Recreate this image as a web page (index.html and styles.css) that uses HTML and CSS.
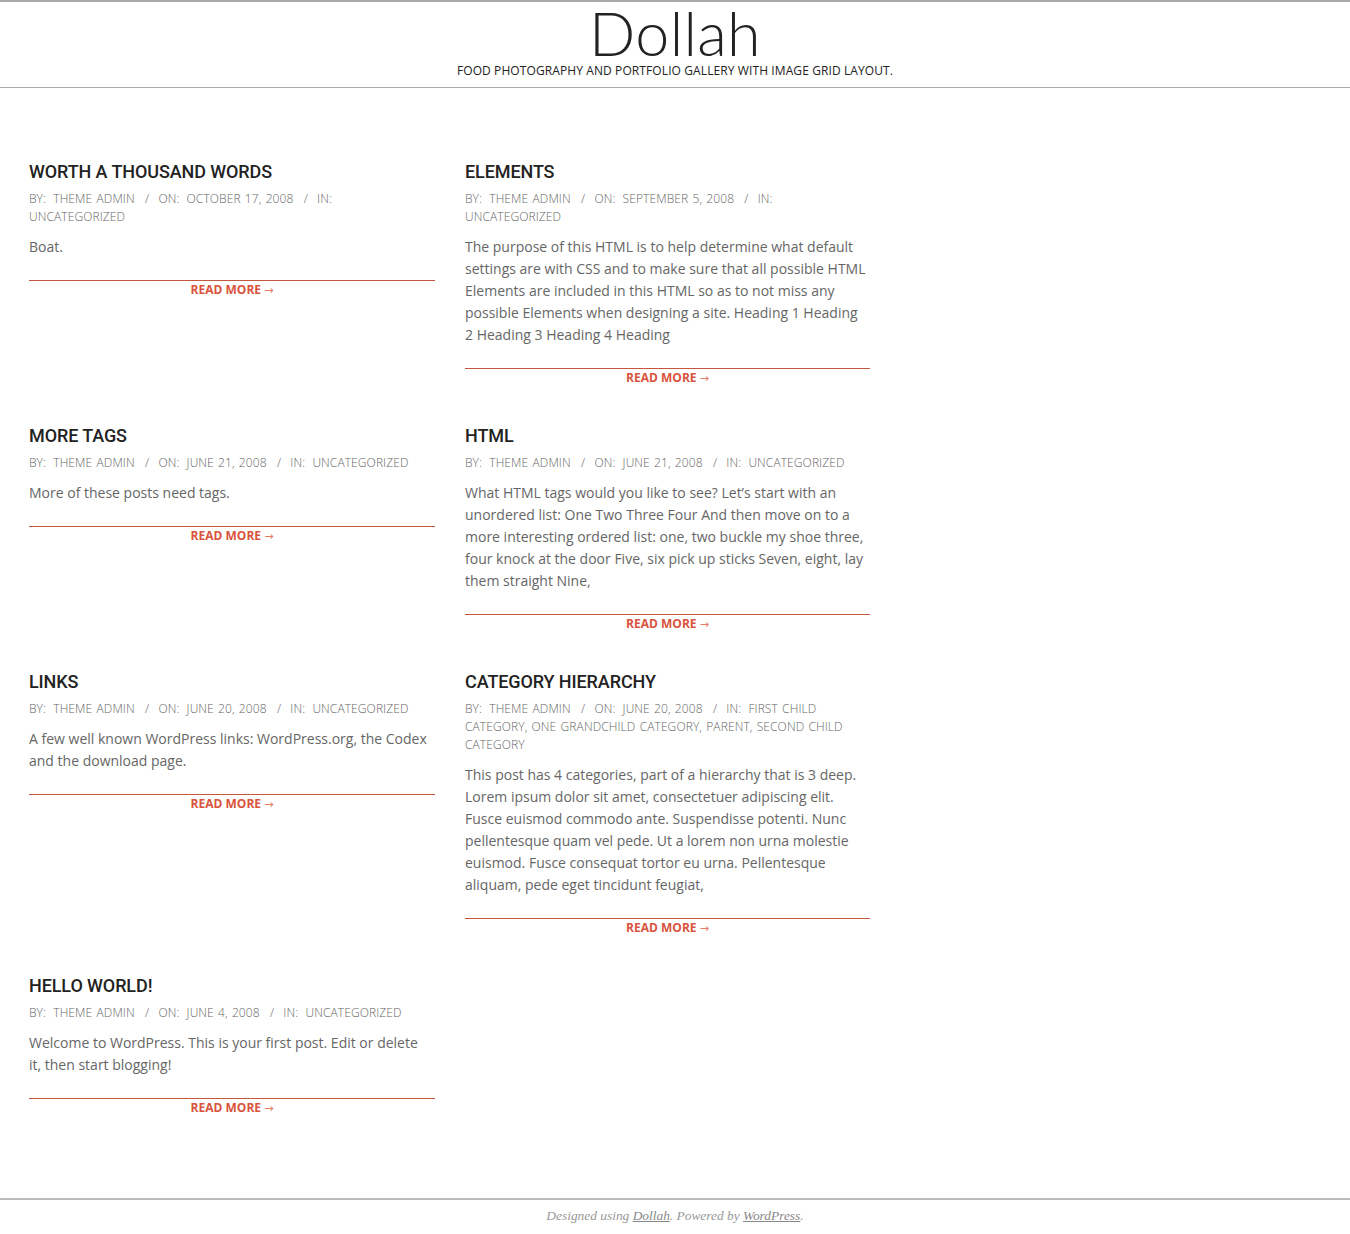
FILE: index.html
```html
<!DOCTYPE html>
<html>
<head>
<meta charset="utf-8">
<title>Dollah</title>
<link rel="stylesheet" href="styles.css">
</head>
<body>
<header class="site-header">
  <h1 class="site-title">Dollah</h1>
  <p class="site-desc">Food photography and portfolio gallery with image grid layout.</p>
</header>
<main class="content">
  <div class="posts">
    <article class="post">
      <h2 class="post-title">Worth a Thousand Words</h2>
      <div class="meta"><span class="lbl">By:</span> <a>Theme Admin</a> <span class="sep">/</span> <span class="lbl">On:</span> <a class="date">October 17, 2008</a> <span class="sep">/</span> <span class="lbl">In:</span> <a>Uncategorized</a></div>
      <p class="excerpt">Boat.</p>
      <div class="more"><a>Read More <span class="arr">&rarr;</span></a></div>
    </article>
    <article class="post">
      <h2 class="post-title">Elements</h2>
      <div class="meta"><span class="lbl">By:</span> <a>Theme Admin</a> <span class="sep">/</span> <span class="lbl">On:</span> <a class="date">September 5, 2008</a> <span class="sep">/</span> <span class="lbl">In:</span> <a>Uncategorized</a></div>
      <p class="excerpt">The purpose of this HTML is to help determine what default settings are with CSS and to make sure that all possible HTML Elements are included in this HTML so as to not miss any possible Elements when designing a site. Heading 1 Heading 2 Heading 3 Heading 4 Heading</p>
      <div class="more"><a>Read More <span class="arr">&rarr;</span></a></div>
    </article>
    <article class="post">
      <h2 class="post-title">More Tags</h2>
      <div class="meta"><span class="lbl">By:</span> <a>Theme Admin</a> <span class="sep">/</span> <span class="lbl">On:</span> <a class="date">June 21, 2008</a> <span class="sep">/</span> <span class="lbl">In:</span> <a>Uncategorized</a></div>
      <p class="excerpt">More of these posts need tags.</p>
      <div class="more"><a>Read More <span class="arr">&rarr;</span></a></div>
    </article>
    <article class="post">
      <h2 class="post-title">HTML</h2>
      <div class="meta"><span class="lbl">By:</span> <a>Theme Admin</a> <span class="sep">/</span> <span class="lbl">On:</span> <a class="date">June 21, 2008</a> <span class="sep">/</span> <span class="lbl">In:</span> <a>Uncategorized</a></div>
      <p class="excerpt">What HTML tags would you like to see? Let’s start with an unordered list: One Two Three Four And then move on to a more interesting ordered list: one, two buckle my shoe three, four knock at the door Five, six pick up sticks Seven, eight, lay them straight Nine,</p>
      <div class="more"><a>Read More <span class="arr">&rarr;</span></a></div>
    </article>
    <article class="post">
      <h2 class="post-title">Links</h2>
      <div class="meta"><span class="lbl">By:</span> <a>Theme Admin</a> <span class="sep">/</span> <span class="lbl">On:</span> <a class="date">June 20, 2008</a> <span class="sep">/</span> <span class="lbl">In:</span> <a>Uncategorized</a></div>
      <p class="excerpt">A few well known WordPress links: WordPress.org, the Codex and the download page.</p>
      <div class="more"><a>Read More <span class="arr">&rarr;</span></a></div>
    </article>
    <article class="post">
      <h2 class="post-title">Category Hierarchy</h2>
      <div class="meta"><span class="lbl">By:</span> <a>Theme Admin</a> <span class="sep">/</span> <span class="lbl">On:</span> <a class="date">June 20, 2008</a> <span class="sep">/</span> <span class="lbl">In:</span> <a>First Child Category</a>, <a>One Grandchild Category</a>, <a>Parent</a>, <a>Second Child Category</a></div>
      <p class="excerpt">This post has 4 categories, part of a hierarchy that is 3 deep. Lorem ipsum dolor sit amet, consectetuer adipiscing elit. Fusce euismod commodo ante. Suspendisse potenti. Nunc pellentesque quam vel pede. Ut a lorem non urna molestie euismod. Fusce consequat tortor eu urna. Pellentesque aliquam, pede eget tincidunt feugiat,</p>
      <div class="more"><a>Read More <span class="arr">&rarr;</span></a></div>
    </article>
    <article class="post">
      <h2 class="post-title">Hello world!</h2>
      <div class="meta"><span class="lbl">By:</span> <a>Theme Admin</a> <span class="sep">/</span> <span class="lbl">On:</span> <a class="date">June 4, 2008</a> <span class="sep">/</span> <span class="lbl">In:</span> <a>Uncategorized</a></div>
      <p class="excerpt">Welcome to WordPress. This is your first post. Edit or delete it, then start blogging!</p>
      <div class="more"><a>Read More <span class="arr">&rarr;</span></a></div>
    </article>
  </div>
</main>
<footer class="site-footer">
  <p>Designed using <a>Dollah</a>. Powered by <a>WordPress</a>.</p>
</footer>
</body>
</html>
```

FILE: styles.css
```css
html, body {
  margin: 0;
  padding: 0;
  background: #fff;
}
body {
  font-family: "Open Sans", "Liberation Sans", sans-serif;
  color: #666;
}
a {
  color: inherit;
  text-decoration: none;
}
.site-header {
  border-top: 2px solid #aaa;
  border-bottom: 1px solid #aaa;
  text-align: center;
  height: 85px;
  box-sizing: content-box;
}
.site-title {
  margin: 0;
  padding: 0;
  font-family: "Lato", sans-serif;
  font-weight: 300;
  font-size: 61px;
  line-height: 62px;
  letter-spacing: 0.3px;
  color: #222;
}
.site-desc {
  margin: -1px 0 0;
  font-size: 12px;
  line-height: 16px;
  letter-spacing: 0.1px;
  text-transform: uppercase;
  color: #222;
}
.content {
  padding: 73px 0 0 29px;
}
.posts {
  display: grid;
  grid-template-columns: 406px 405px;
  column-gap: 30px;
  row-gap: 37px;
  align-items: start;
}
.post-title {
  margin: 0;
  font-family: "Roboto", sans-serif;
  font-weight: 500;
  font-size: 18px;
  line-height: 22px;
  letter-spacing: -0.1px;
  text-transform: uppercase;
  color: #222;
}
.meta {
  margin-top: 7px;
  font-size: 12px;
  line-height: 18px;
  font-weight: 300;
  letter-spacing: 0.1px;
  text-transform: uppercase;
  color: #666;
  word-spacing: 1px;
}
.meta .lbl {
  margin-right: 3px;
}
.meta .sep {
  margin: 0 5px 0 6px;
}
.meta .date {
  white-space: nowrap;
}
.excerpt {
  margin: 10px 0 0;
  padding-right: 2px;
  font-size: 14px;
  line-height: 22px;
  color: #666;
}
.more {
  margin-top: 22px;
  border-top: 1px solid #c4573c;
  text-align: center;
  font-size: 12px;
  line-height: 18px;
  font-weight: 700;
  text-transform: uppercase;
  color: #d9533d;
}
.more .arr {
  font-family: "DejaVu Sans", sans-serif;
  font-size: 11px;
  font-weight: 400;
  color: #e57a66;
}
.site-footer {
  margin-top: 80px;
  border-top: 2px solid #bbb;
  text-align: center;
}
.site-footer p {
  margin: 0;
  padding: 7px 0 10px;
  font-family: "Liberation Serif", serif;
  font-style: italic;
  font-size: 13.4px;
  line-height: 18px;
  color: #999;
}
.site-footer a {
  text-decoration: underline;
  color: #888;
}
```
